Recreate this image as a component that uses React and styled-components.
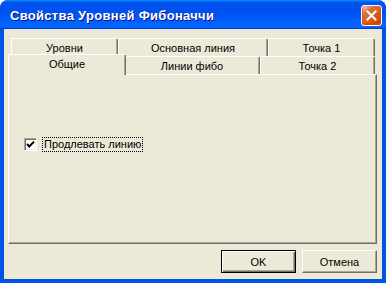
import styled, { createGlobalStyle } from 'styled-components';

const GlobalStyle = createGlobalStyle`
  html, body {
    margin: 0;
    padding: 0;
    background: #ffffff;
  }
  body {
    font-family: "Liberation Sans", Arial, sans-serif;
  }
`;

const Frame = styled.div`
  width: 386px;
  height: 283px;
  display: flex;
  flex-direction: column;
  border-radius: 8px 8px 0 0;
  overflow: hidden;
  background: #0054e3;
  box-sizing: border-box;
`;

const TitleBar = styled.div`
  height: 29px;
  flex: none;
  display: flex;
  justify-content: space-between;
  padding: 0 4px 0 10px;
  background: linear-gradient(
    180deg,
    #0997ff 0%,
    #0053ee 8%,
    #0050ee 40%,
    #0066ff 88%,
    #0066ff 93%,
    #005bff 95%,
    #003dd7 96%,
    #003dd7 100%
  );
`;

const Title = styled.div`
  align-self: center;
  margin-top: 1px;
  color: #fff;
  font: bold 13px "Liberation Sans", Arial, sans-serif;
  text-shadow: 1px 1px #0f1089;
  letter-spacing: 0.3px;
`;

const CloseButton = styled.div`
  width: 21px;
  height: 21px;
  margin-top: 5px;
  box-sizing: border-box;
  border: 1px solid #fff;
  border-radius: 3px;
  display: flex;
  align-items: center;
  justify-content: center;
  background: radial-gradient(circle at 90% 90%, #cc4600 0%, #dc6527 55%, #cd7546 70%, #ffccb2 90%, #fff 100%);
  box-shadow: inset 0 -1px 2px 1px #da4600;
`;

const Body = styled.div`
  flex: 1;
  display: flex;
  flex-direction: column;
  margin: 0 4px 4px;
  padding: 9px 5px 6px 4px;
  background: #ece9d8;
  font: 11px "Liberation Sans", Arial, sans-serif;
  color: #000;
`;

const TabRow = styled.div`
  display: flex;
  height: 18px;
  align-items: flex-end;
  padding-left: ${p => p.$indent}px;
`;

const Tab = styled.div`
  width: ${p => p.$w}px;
  height: ${p => (p.$selected ? 21 : 18)}px;
  margin: ${p => (p.$selected ? '0 -2px -1px' : '0')};
  position: ${p => (p.$selected ? 'relative' : 'static')};
  z-index: ${p => (p.$selected ? 2 : 'auto')};
  box-sizing: border-box;
  flex: none;
  display: flex;
  align-items: center;
  justify-content: center;
  padding-bottom: ${p => (p.$selected ? 2 : 0)}px;
  background: #ece9d8;
  border-top: 1px solid #fff;
  border-left: 1px solid #fff;
  border-right: 1px solid #716f64;
  border-radius: 2px 2px 0 0;
  box-shadow: inset -1px 0 #aca899;
`;

const Panel = styled.div`
  height: 170px;
  flex: none;
  box-sizing: border-box;
  border-top: 1px solid #fff;
  border-left: 1px solid #fff;
  border-right: 1px solid #716f64;
  border-bottom: 1px solid #716f64;
  box-shadow: inset -1px -1px #aca899;
  padding: 62px 0 0 15px;
`;

const CheckRow = styled.div`
  display: flex;
  align-items: center;
  height: 15px;
`;

const CheckBox = styled.div`
  width: 13px;
  height: 13px;
  box-sizing: border-box;
  background: #fff;
  border: 1px solid;
  border-color: #aca899 #fff #fff #aca899;
  box-shadow: inset 1px 1px #716f64, inset -1px -1px #f1efe2;
  display: flex;
  align-items: center;
  justify-content: center;
`;

const CheckLabel = styled.div`
  margin-left: 5px;
  padding: 0 1px;
  line-height: 13px;
  border: 1px dotted #000;
`;

const ButtonRow = styled.div`
  display: flex;
  justify-content: flex-end;
  gap: 6px;
  margin-top: 6px;
`;

const Button = styled.div`
  width: 75px;
  height: 23px;
  box-sizing: border-box;
  display: flex;
  align-items: center;
  justify-content: center;
  background: #ece9d8;
  border: 1px solid;
  border-color: ${p => (p.$default ? '#000' : '#fff #716f64 #716f64 #fff')};
  box-shadow: ${p =>
    p.$default
      ? 'inset 1px 1px #fff, inset -1px -1px #716f64, inset -2px -2px #aca899'
      : 'inset -1px -1px #aca899'};
`;

export default function App() {
  return (
    <>
      <GlobalStyle />
      <Frame>
        <TitleBar>
          <Title>Свойства Уровней Фибоначчи</Title>
          <CloseButton>
            <svg width="11" height="11" viewBox="0 0 11 11">
              <path d="M1.5 1.5 L9.5 9.5 M9.5 1.5 L1.5 9.5" stroke="#fff" strokeWidth="2" strokeLinecap="square" />
            </svg>
          </CloseButton>
        </TitleBar>
        <Body>
          <TabRow $indent={3}>
            <Tab $w={107}>Уровни</Tab>
            <Tab $w={150}>Основная линия</Tab>
            <Tab $w={107}>Точка 1</Tab>
          </TabRow>
          <TabRow $indent={2}>
            <Tab $w={118} $selected>Общие</Tab>
            <Tab $w={136}>Линии фибо</Tab>
            <Tab $w={115}>Точка 2</Tab>
          </TabRow>
          <Panel>
            <CheckRow>
              <CheckBox>
                <svg width="9" height="9" viewBox="0 0 9 9">
                  <path d="M1 4 L3.3 6.5 L8 1.6" stroke="#000" strokeWidth="2" fill="none" />
                </svg>
              </CheckBox>
              <CheckLabel>Продлевать линию</CheckLabel>
            </CheckRow>
          </Panel>
          <ButtonRow>
            <Button $default>OK</Button>
            <Button>Отмена</Button>
          </ButtonRow>
        </Body>
      </Frame>
    </>
  );
}
